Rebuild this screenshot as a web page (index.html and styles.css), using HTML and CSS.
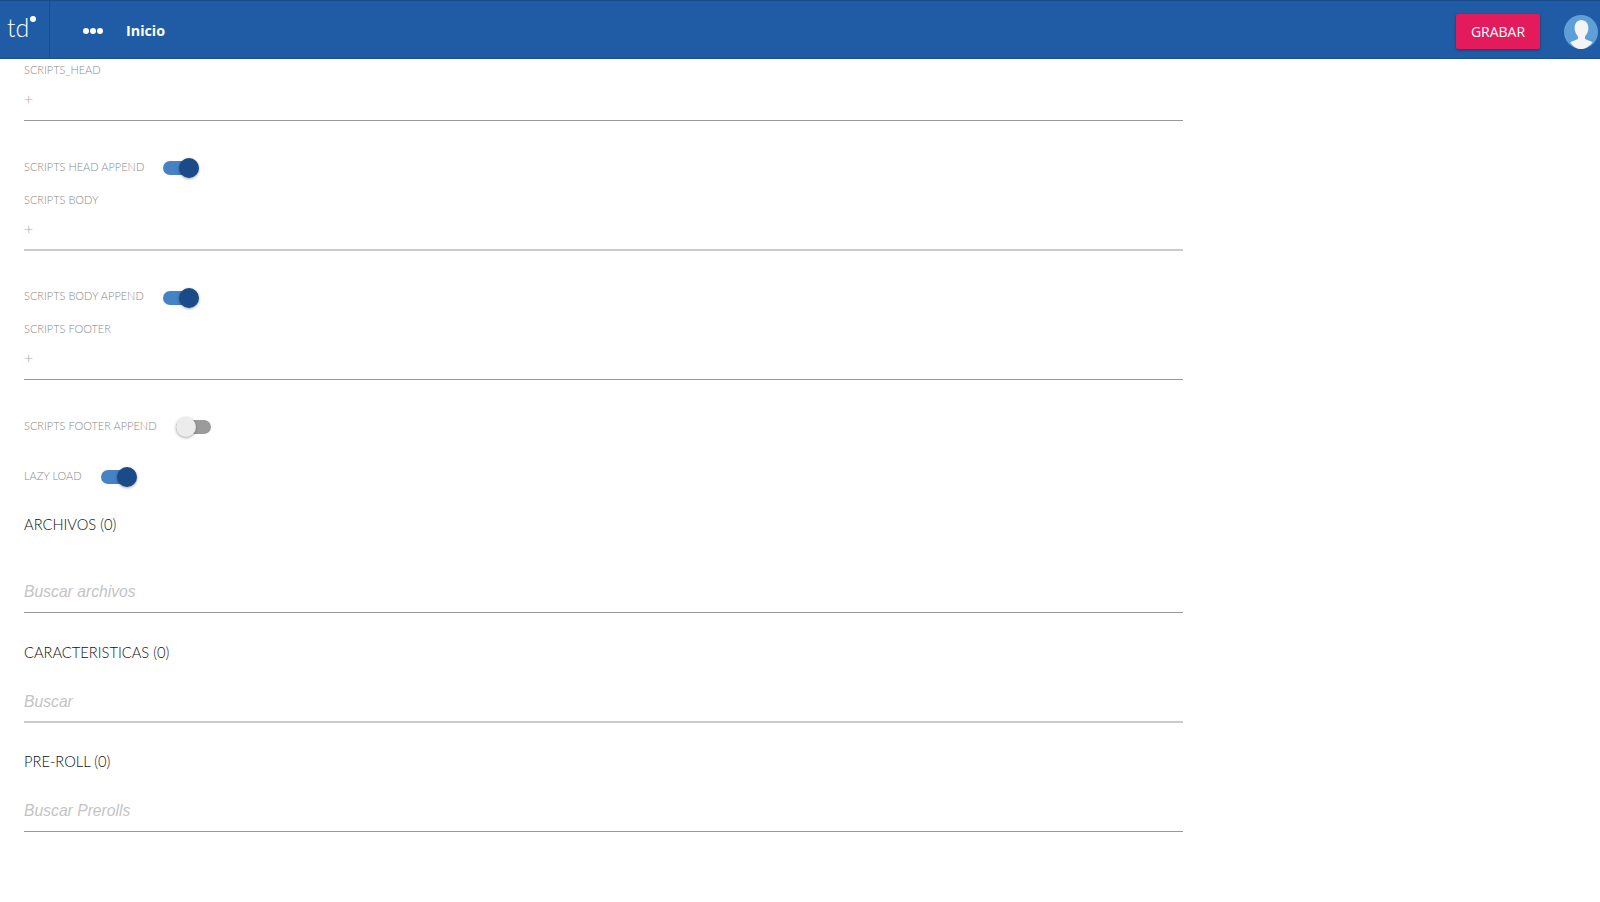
FILE: index.html
```html
<!DOCTYPE html>
<html lang="en">
<head>
    <meta charset="UTF-8">
    <title>Inicio</title>
    <link rel="stylesheet" href="styles.css">
</head>
<body>
    <header class="topbar">
        <div class="logo">
            <span class="logo-text">td</span>
            <span class="logo-dot"></span>
        </div>
        <div class="dots"><span></span><span></span><span></span></div>
        <div class="page-title">Inicio</div>
        <button class="save-btn">GRABAR</button>
        <div class="avatar">
            <svg viewBox="0 0 34 34" width="34" height="34">
                <circle cx="17" cy="17" r="17" fill="#5f9fd8"/>
                <path d="M17 5c4.600 0 7.400 3.600 7.400 8 0 3.600-1.600 6.600-3.400 8.400v2.400c2 1.400 4.800 2 7.600 3.400C25.500 31 21.500 34 17 34S8.500 31 6.400 27.200c2.800-1.400 5.600-2 7.600-3.400v-2.400c-1.800-1.800-3.400-4.800-3.400-8.400 0-4.400 2.800-8 6.400-8z" fill="#f4f4f4"/>
            </svg>
        </div>
    </header>

    <main class="content">
        <div class="field">
            <div class="field-label">SCRIPTS_HEAD</div>
            <div class="field-input">+</div>
        </div>
        <div class="toggle-row">
            <span class="field-label">SCRIPTS HEAD APPEND</span>
            <span class="toggle on"></span>
        </div>
        <div class="field soft">
            <div class="field-label">SCRIPTS BODY</div>
            <div class="field-input">+</div>
        </div>
        <div class="toggle-row">
            <span class="field-label">SCRIPTS BODY APPEND</span>
            <span class="toggle on"></span>
        </div>
        <div class="field">
            <div class="field-label">SCRIPTS FOOTER</div>
            <div class="field-input">+</div>
        </div>
        <div class="toggle-row">
            <span class="field-label">SCRIPTS FOOTER APPEND</span>
            <span class="toggle"></span>
        </div>
        <div class="toggle-row lazy">
            <span class="field-label">LAZY LOAD</span>
            <span class="toggle on"></span>
        </div>

        <h2 class="section-title">ARCHIVOS (0)</h2>
        <div class="search search-files">Buscar archivos</div>
        <h2 class="section-title">CARACTERISTICAS (0)</h2>
        <div class="search soft">Buscar</div>
        <h2 class="section-title">PRE-ROLL (0)</h2>
        <div class="search">Buscar Prerolls</div>
    </main>
</body>
</html>
```

FILE: styles.css
```css
* {
    box-sizing: border-box;
}
body {
    margin: 0;
    background: #fff;
    font-family: "Open Sans", Arial, sans-serif;
    overflow: hidden;
}
.topbar {
    height: 59px;
    display: flex;
    align-items: center;
    background: #205ca5;
    border-top: 1px solid #194a8a;
    border-bottom: 1px solid #1b4f90;
}
.logo {
    position: relative;
    width: 50px;
    height: 57px;
    border-right: 1px solid #1a4c8a;
    padding: 12px 0 0 7px;
}
.logo-text {
    color: #fff;
    font-family: "Lato", sans-serif;
    font-weight: 300;
    font-size: 25px;
    line-height: 28px;
}
.logo-dot {
    position: absolute;
    left: 30px;
    top: 15px;
    width: 6px;
    height: 6px;
    border-radius: 50%;
    background: #fff;
}
.dots {
    display: flex;
    gap: 1px;
    margin: 3px 0 0 33px;
}
.dots span {
    width: 6px;
    height: 6px;
    border-radius: 50%;
    background: #fff;
}
.page-title {
    margin: 1px 0 0 23px;
    color: #fff;
    font-size: 14.3px;
    font-weight: 700;
}
.save-btn {
    margin: 4px 0 0 auto;
    width: 84px;
    height: 35px;
    border: none;
    border-radius: 2px;
    background: #e31b5c;
    color: #fff;
    font-family: "Open Sans", sans-serif;
    font-size: 14px;
    font-weight: 500;
    box-shadow: 0 1px 3px rgba(0, 0, 0, 0.4);
}
.avatar {
    width: 34px;
    height: 34px;
    margin: 4px 2px 0 24px;
}
.content {
    width: 1183px;
    padding: 1px 0 0 24px;
}
.field-label {
    font-family: "Lato", sans-serif;
    font-weight: 300;
    font-size: 11px;
    color: #888;
    white-space: nowrap;
}
.field {
    height: 61px;
    padding-top: 2px;
    border-bottom: 1px solid #999;
}
.field .field-label {
    line-height: 16px;
}
.field-input {
    margin-top: 9px;
    font-family: "Lato", sans-serif;
    font-size: 16px;
    font-weight: 300;
    line-height: 24px;
    color: #aaa;
}
.toggle-row {
    display: flex;
    align-items: center;
    gap: 19px;
    height: 24px;
    margin: 35px 0 9.5px;
}
.toggle-row .field-label {
    margin-bottom: 4px;
}
.toggle-row + .toggle-row {
    margin: 26px 0 0;
}
.toggle {
    position: relative;
    display: block;
    width: 35px;
    height: 14px;
    border-radius: 7px;
    background: #9b9b9b;
}
.toggle::after {
    content: "";
    position: absolute;
    left: 0;
    top: -3px;
    width: 20px;
    height: 20px;
    border-radius: 50%;
    background: #ececec;
    box-shadow: 0 1px 3px rgba(0, 0, 0, 0.35);
}
.toggle.on {
    background: #4583c5;
}
.toggle.on::after {
    left: 16px;
    background: #1a4a87;
}
.section-title {
    margin: 0 0 2px;
    font-family: "Lato", sans-serif;
    font-weight: 300;
    font-size: 14.7px;
    line-height: 18px;
    color: #111;
}
.toggle-row.lazy + .section-title {
    margin-top: 26px;
}
.search {
    height: 60px;
    margin-bottom: 29px;
    padding-top: 28px;
    border-bottom: 1px solid #999;
    font-family: "Liberation Sans", Arial, sans-serif;
    font-style: italic;
    font-size: 15.7px;
    line-height: 22px;
    color: #c4c4c4;
}
.search-files {
    height: 78px;
    margin-bottom: 30px;
    padding-top: 46px;
}
.field.soft,
.search.soft {
    border-bottom: 2px solid #cbcbcb;
}
```
